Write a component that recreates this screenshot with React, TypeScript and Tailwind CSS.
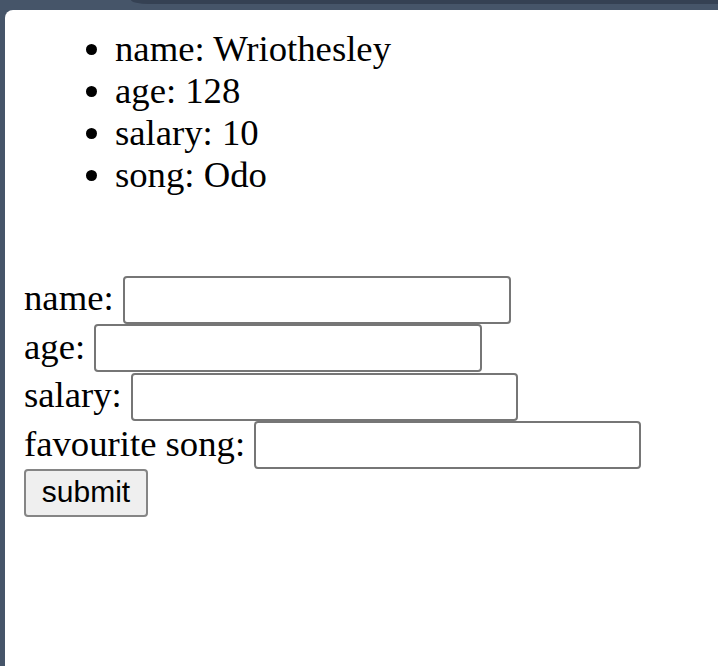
import React from "react";

const serif = { fontFamily: '"Liberation Serif", "Times New Roman", serif' };

export default function App() {
  const rows: { label: string; w: string; h: string }[] = [
    { label: "name:", w: "w-[388px]", h: "h-[49px]" },
    { label: "age:", w: "w-[388px]", h: "h-[48px]" },
    { label: "salary:", w: "w-[387px]", h: "h-[49px]" },
    { label: "favourite song:", w: "w-[387px]", h: "h-[48px]" },
  ];
  return (
    <div className="h-screen w-full bg-[#465569] flex flex-col overflow-hidden">
      <div className="h-[4px] ml-[131px] bg-[#354153] rounded-bl-[18px_4px] shrink-0" />
      <div className="h-[6px] shrink-0" />
      <div
        className="flex-1 ml-[5px] bg-white rounded-tl-[8px] pl-[19px] pt-[18px] text-black"
        style={serif}
      >
        <ul className="list-disc pl-[91px] text-[36.7px] leading-[42px]">
          <li>name: Wriothesley</li>
          <li>age: 128</li>
          <li>salary: 10</li>
          <li>song: Odo</li>
        </ul>
        <form className="mt-[79px] flex flex-col text-[36.7px] leading-[42px]" onSubmit={(e) => e.preventDefault()}>
          {rows.map((r) => (
            <div key={r.label} className={`flex items-center gap-[9px] ${r.h}`}>
              <span className="pb-[3px]">{r.label}</span>
              <input
                type="text"
                className={`${r.w} h-[48px] border-2 border-[#767676] rounded-[4px] bg-white outline-none`}
              />
            </div>
          ))}
          <div className="h-[48px] flex items-center">
            <button
              type="submit"
              className="w-[124px] h-[48px] bg-[#efefef] border-2 border-[#858585] rounded-[4px] text-[30px] leading-none text-black pb-[2px]"
              style={{ fontFamily: '"Liberation Sans", Arial, sans-serif' }}
            >
              submit
            </button>
          </div>
        </form>
      </div>
    </div>
  );
}
